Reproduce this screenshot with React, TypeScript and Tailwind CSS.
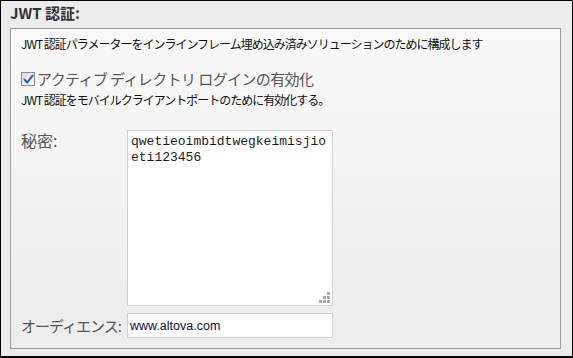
import React from "react";

const jp = "font-['Meiryo_UI','Noto_Sans_CJK_JP','Liberation_Sans',sans-serif]";

function CheckMark() {
  return (
    <span className="flex h-[14px] w-[14px] shrink-0 items-center justify-center border border-[#8e8f8f] bg-gradient-to-br from-[#dcdcdc] to-[#fbfbfb]">
      <svg width="11" height="11" viewBox="0 0 11 11">
        <path d="M1.5 5.5 L4.2 8.6 L9.6 1.6" fill="none" stroke="#2b5fb3" strokeWidth="2" strokeLinecap="round" strokeLinejoin="round" />
      </svg>
    </span>
  );
}

// dotted resize grip like the old IE textarea
function Grip() {
  const dots = [
    [8, 0],
    [4, 4], [8, 4],
    [0, 8], [4, 8], [8, 8],
  ];
  return (
    <svg width="11" height="11" viewBox="0 0 11 11" className="pointer-events-none absolute bottom-[3px] right-[3px]">
      {dots.map(([x, y]) => (
        <rect key={`${x}-${y}`} x={x} y={y} width="3" height="3" fill="#a8a8a8" />
      ))}
    </svg>
  );
}

export default function App() {
  return (
    <div className={`box-border flex h-[358px] w-[573px] flex-col border border-b-2 border-black bg-[#ececec] ${jp}`}>
      <div className="h-[27px] pl-[9px] pt-[3px] text-[15px] font-bold leading-[18px] text-[#333333]">
        JWT 認証:
      </div>
      <div className="ml-[9px] flex h-[321px] w-[551px] flex-col border border-[#9c9c9c] bg-gradient-to-b from-[#f9f9f9] to-[#ececec] pl-[10px]">
        <p className="mt-[7px] text-[12px] leading-[15px] tracking-[-1px] text-[#111]">
          JWT 認証パラメーターをインラインフレーム埋め込み済みソリューションのために構成します
        </p>
        <label className="mt-[19px] flex items-center gap-[2px]">
          <CheckMark />
          <span className="text-[15px] leading-[18px] tracking-[-0.6px] text-[#555]">アクティブ ディレクトリ ログインの有効化</span>
        </label>
        <p className="mt-[4px] text-[12px] leading-[15px] tracking-[-1px] text-[#111]">
          JWT 認証をモバイルクライアントポートのために有効化する。
        </p>
        <div className="mt-[23px] flex">
          <span className="w-[106px] pt-[1px] text-[16px] leading-[18px] text-[#555]">秘密:</span>
          <div className="relative">
            <textarea
              readOnly
              value="qwetieoimbidtwegkeimisjioeti123456"
              className="box-border block h-[176px] w-[206px] resize-none border border-[#cfcfcf] bg-white px-[3px] pt-[3px] font-['Liberation_Mono',monospace] text-[13px] leading-[16px] text-[#1b1b1b] outline-none"
            />
            <Grip />
          </div>
        </div>
        <div className="mt-[7px] flex items-center">
          <span className="w-[106px] whitespace-nowrap text-[15px] leading-[18px] tracking-[-1px] text-[#555]">オーディエンス:</span>
          <input
            readOnly
            value="www.altova.com"
            className="box-border h-[25px] w-[206px] border border-[#cfcfcf] bg-white px-[2px] font-['Liberation_Sans',sans-serif] text-[12.5px] text-[#0c0c3c] outline-none"
          />
        </div>
      </div>
    </div>
  );
}
